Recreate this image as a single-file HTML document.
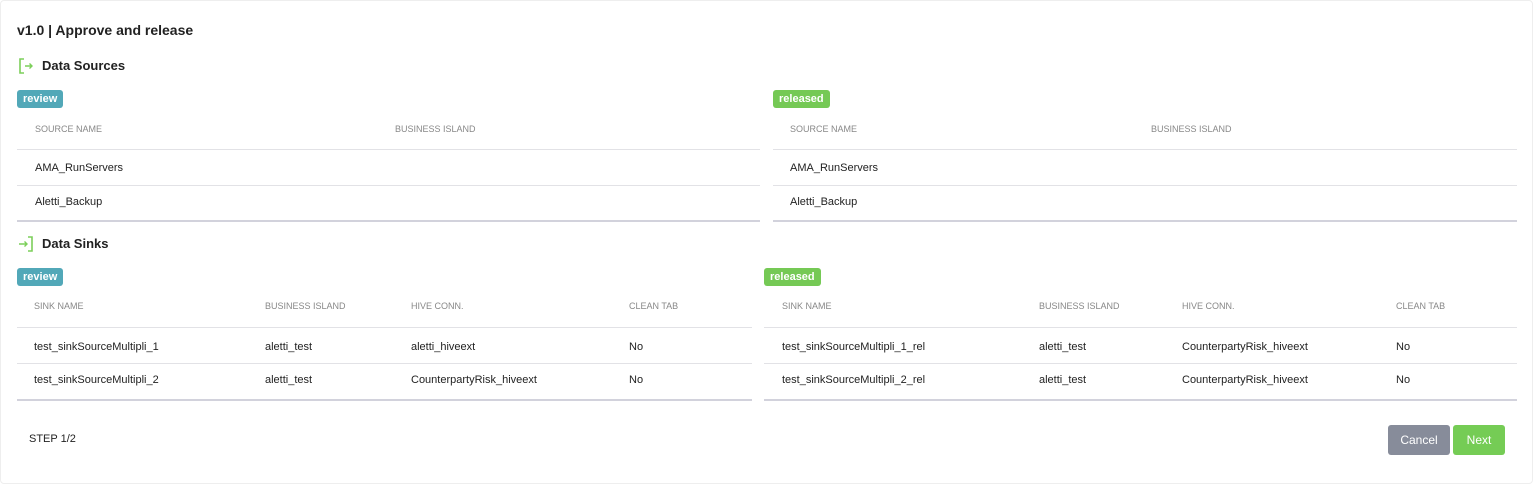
<!DOCTYPE html><html><head><style>
body{margin:0;width:1534px;height:485px;background:#fff;font-family:"Liberation Sans",sans-serif;position:relative;overflow:hidden}
.a{position:absolute;white-space:nowrap}
.t{font-size:14px;font-weight:bold;color:#222}
.h{font-size:9px;color:#888;top:0}
.c{font-size:11px;color:#222}
.b{position:absolute;height:18px;line-height:19px;border-radius:3px;color:#fff;font-size:11px;font-weight:bold;padding:0 6px}
.l{position:absolute;height:1px;background:#e2e2e6}
.lb{position:absolute;height:2px;background:#d2d2dc}
</style></head><body>
<div style="position:absolute;left:0;top:0;width:1533px;height:484px;border:1px solid #eee;border-radius:4px;box-sizing:border-box"></div>
<div class="a t" style="left:17px;top:22px;font-size:14px">v1.0 | Approve and release</div>
<svg class="a" style="left:18px;top:57px" width="16" height="18" viewBox="0 0 16 18"><path d="M6 2H2v14h4" fill="none" stroke="#7ccf5a" stroke-width="1.6"/><path d="M7 9h7M11.5 6.5 14 9l-2.5 2.5" fill="none" stroke="#7ccf5a" stroke-width="1.4"/></svg>
<div class="a t" style="left:42px;top:58px;font-size:13px">Data Sources</div>
<div class="b" style="left:17px;top:90px;background:#52a8b8">review</div>
<div class="b" style="left:773px;top:90px;background:#75c955">released</div>
<div class="a h" style="left:35px;top:124px">SOURCE NAME</div><div class="a h" style="left:395px;top:124px">BUSINESS ISLAND</div>
<div class="a h" style="left:790px;top:124px">SOURCE NAME</div><div class="a h" style="left:1151px;top:124px">BUSINESS ISLAND</div>
<div class="l" style="left:17px;width:743px;top:149px"></div><div class="l" style="left:17px;width:743px;top:185px"></div><div class="lb" style="left:17px;width:743px;top:220px"></div>
<div class="l" style="left:773px;width:744px;top:149px"></div><div class="l" style="left:773px;width:744px;top:185px"></div><div class="lb" style="left:773px;width:744px;top:220px"></div>
<div class="a c" style="left:35px;top:162px">AMA_RunServers</div><div class="a c" style="left:35px;top:196px">Aletti_Backup</div>
<div class="a c" style="left:790px;top:162px">AMA_RunServers</div><div class="a c" style="left:790px;top:196px">Aletti_Backup</div>
<svg class="a" style="left:18px;top:235px" width="16" height="18" viewBox="0 0 16 18"><path d="M10 2h4v14h-4" fill="none" stroke="#7ccf5a" stroke-width="1.6"/><path d="M1 9h8M6.5 6.5 9 9l-2.5 2.5" fill="none" stroke="#7ccf5a" stroke-width="1.4"/></svg>
<div class="a t" style="left:42px;top:236px;font-size:13px">Data Sinks</div>
<div class="b" style="left:17px;top:268px;background:#52a8b8">review</div>
<div class="b" style="left:764px;top:268px;background:#75c955">released</div>
<div class="a h" style="left:34px;top:301px">SINK NAME</div><div class="a h" style="left:265px;top:301px">BUSINESS ISLAND</div><div class="a h" style="left:411px;top:301px">HIVE CONN.</div><div class="a h" style="left:629px;top:301px">CLEAN TAB</div>
<div class="a h" style="left:782px;top:301px">SINK NAME</div><div class="a h" style="left:1039px;top:301px">BUSINESS ISLAND</div><div class="a h" style="left:1182px;top:301px">HIVE CONN.</div><div class="a h" style="left:1396px;top:301px">CLEAN TAB</div>
<div class="l" style="left:17px;width:735px;top:327px"></div><div class="l" style="left:17px;width:735px;top:363px"></div><div class="lb" style="left:17px;width:735px;top:399px"></div>
<div class="l" style="left:764px;width:753px;top:327px"></div><div class="l" style="left:764px;width:753px;top:363px"></div><div class="lb" style="left:764px;width:753px;top:399px"></div>
<div class="a c" style="left:34px;top:341px">test_sinkSourceMultipli_1</div><div class="a c" style="left:265px;top:341px">aletti_test</div><div class="a c" style="left:411px;top:341px">aletti_hiveext</div><div class="a c" style="left:629px;top:341px">No</div>
<div class="a c" style="left:34px;top:374px">test_sinkSourceMultipli_2</div><div class="a c" style="left:265px;top:374px">aletti_test</div><div class="a c" style="left:411px;top:374px">CounterpartyRisk_hiveext</div><div class="a c" style="left:629px;top:374px">No</div>
<div class="a c" style="left:782px;top:341px">test_sinkSourceMultipli_1_rel</div><div class="a c" style="left:1039px;top:341px">aletti_test</div><div class="a c" style="left:1182px;top:341px">CounterpartyRisk_hiveext</div><div class="a c" style="left:1396px;top:341px">No</div>
<div class="a c" style="left:782px;top:374px">test_sinkSourceMultipli_2_rel</div><div class="a c" style="left:1039px;top:374px">aletti_test</div><div class="a c" style="left:1182px;top:374px">CounterpartyRisk_hiveext</div><div class="a c" style="left:1396px;top:374px">No</div>
<div class="a c" style="left:29px;top:433px">STEP 1/2</div>
<div class="a" style="left:1388px;top:425px;width:62px;height:30px;background:#878c9a;border-radius:3px;color:#fff;font-size:12px;line-height:30px;text-align:center">Cancel</div>
<div class="a" style="left:1453px;top:425px;width:52px;height:30px;background:#75cc55;border-radius:3px;color:#fff;font-size:12px;line-height:30px;text-align:center">Next</div>
</body></html>
